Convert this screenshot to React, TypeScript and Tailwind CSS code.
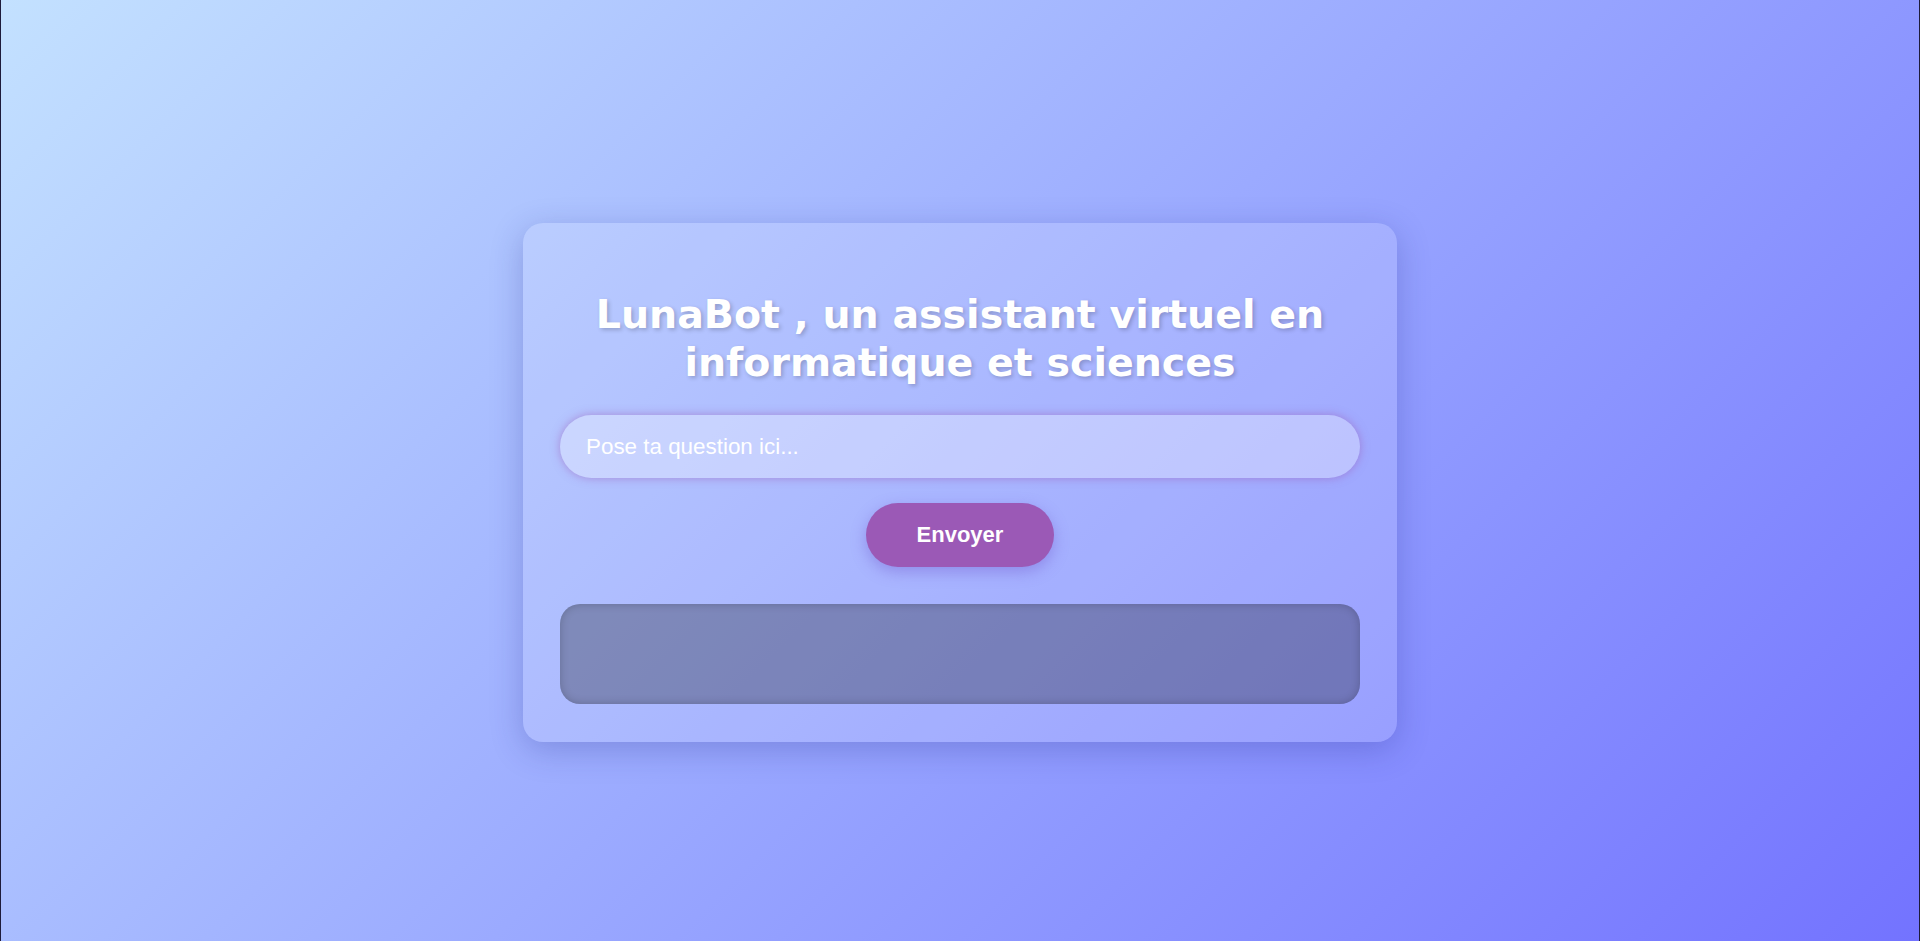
import { useState } from "react";

export default function App() {
  const [question, setQuestion] = useState("");

  return (
    <div className="flex min-h-screen w-full justify-center border-x border-[#1e1b3a] bg-[linear-gradient(135deg,#c3e1ff,#7373ff)] pt-[223px]">
      <div className="flex h-[519px] w-[874px] flex-col items-center rounded-[20px] bg-white/15 px-[37px] pb-[38px] pt-[40px] shadow-[0_8px_32px_rgba(31,38,135,0.25)]">
        <h1 className="mb-[29px] mt-[27px] text-center font-['DejaVu_Sans',Verdana,sans-serif] text-[39.5px] font-bold leading-[48px] text-white [text-shadow:2px_2px_4px_rgba(0,0,0,0.2)]">
          LunaBot , un assistant virtuel en informatique et sciences
        </h1>

        <input
          value={question}
          onChange={(e) => setQuestion(e.target.value)}
          placeholder="Pose ta question ici..."
          className="h-[63px] w-full rounded-full bg-white/30 px-[26px] font-['Liberation_Sans',Arial,sans-serif] text-[22.4px] text-white shadow-[0_0_10px_rgba(155,89,182,0.55)] outline-none placeholder:text-white"
        />

        <button className="mt-[25px] h-[64px] w-[188px] rounded-full bg-[#9b59b6] pb-[2px] font-['Liberation_Sans',Arial,sans-serif] text-[22px] font-bold text-white shadow-[0_5px_15px_rgba(110,80,200,0.4)]">
          Envoyer
        </button>

        <div className="mt-[37px] h-[100px] w-full rounded-[20px] bg-[rgba(0,0,0,0.27)] shadow-[inset_0_0_10px_rgba(0,0,0,0.2)]" />
      </div>
    </div>
  );
}
